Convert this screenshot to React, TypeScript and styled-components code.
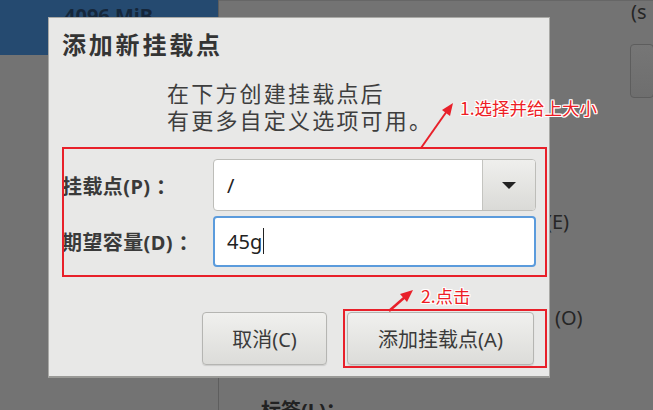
import styled, { createGlobalStyle } from "styled-components";

const GlobalStyle = createGlobalStyle`
    html, body {
        margin: 0;
        padding: 0;
        background: #737373;
    }
    * {
        box-sizing: border-box;
    }
`;

const UI_FONT = `"Noto Sans", "Noto Sans CJK SC", "DejaVu Sans", sans-serif`;

const Screen = styled.div`
    position: relative;
    width: 653px;
    height: 410px;
    overflow: hidden;
    display: grid;
    grid-template-columns: 219px 1fr;
    background: #737373;
    font-family: ${UI_FONT};
`;

/* ---------- dimmed window behind the dialog ---------- */

const LeftPane = styled.div`
    display: flex;
    flex-direction: column;
    border-right: 1px solid #5e5e5e;
`;

const SelectedRow = styled.div`
    height: 55px;
    background: #254a70;
    padding: 6px 0 0 64px;
    font-size: 20px;
    font-weight: bold;
    color: #15263a;
    line-height: 20px;
`;

const RightPane = styled.div`
    display: grid;
    grid-template-columns: 1fr 5px;
    border-top: 1px solid #666;
    overflow: hidden;
`;

const RightContent = styled.div`
    display: flex;
    flex-direction: column;
`;

const BgRow = styled.div<{ $indent: number; $height: number; $top?: number }>`
    height: ${(p) => p.$height}px;
    margin-top: ${(p) => p.$top ?? 0}px;
    padding-left: ${(p) => p.$indent}px;
    display: flex;
    align-items: center;
    white-space: nowrap;
    font-size: 20px;
    color: #262626;
`;

const BgLabel = styled.span`
    font-weight: bold;
    color: #222;
`;

const GhostButton = styled.div`
    width: 24px;
    height: 54px;
    border: 1px solid #5d5d5d;
    border-radius: 4px;
    background: linear-gradient(#767676, #6e6e6e);
`;

const ScrollStrip = styled.div`
    background: linear-gradient(#254a70 0, #254a70 57px, transparent 57px);
`;

/* ---------- dialog ---------- */

const Dialog = styled.div`
    position: absolute;
    left: 48px;
    top: 17px;
    width: 502px;
    height: 361px;
    background: #e8e8e7;
    border: 1px solid #a9a9a6;
    border-bottom: 2px solid #9a9a97;
    padding: 10px 14px 0 13px;
    display: flex;
    flex-direction: column;
    color: #353535;
`;

const Title = styled.h1`
    margin: 0;
    font-size: 24px;
    line-height: 34px;
    letter-spacing: 2.8px;
    font-weight: bold;
    font-family: ${UI_FONT};
    color: #343434;
`;

const Hint = styled.p`
    margin: 18px 0 0 105px;
    font-size: 22px;
    line-height: 27px;
    letter-spacing: 2.2px;
    color: #3e3e3e;
`;

const Form = styled.div`
    margin-top: 25px;
    display: grid;
    grid-template-columns: 151px 323px;
    grid-auto-rows: 52px;
    row-gap: 4px;
    align-items: center;
`;

const FieldLabel = styled.label`
    font-size: 20px;
    letter-spacing: 0.4px;
    font-weight: bold;
    color: #3a3a3a;
    white-space: nowrap;
`;

const Combo = styled.div`
    height: 52px;
    display: flex;
    border: 1px solid #bdbdb9;
    border-radius: 4px;
    background: #fff;
    overflow: hidden;
`;

const ComboText = styled.div`
    flex: 1;
    display: flex;
    align-items: center;
    padding-left: 13px;
    font-size: 20px;
    color: #222;
`;

const ComboButton = styled.div`
    width: 53px;
    display: flex;
    align-items: center;
    justify-content: center;
    border-left: 1px solid #c4c4c0;
    background: linear-gradient(#efefed, #dadad7);
`;

const Caret = styled.div`
    width: 0;
    height: 0;
    border-left: 7px solid transparent;
    border-right: 7px solid transparent;
    border-top: 7px solid #222;
`;

const Entry = styled.div`
    height: 51px;
    display: flex;
    align-items: center;
    padding-left: 12px;
    border: 2px solid #5b9bdc;
    border-radius: 4px;
    background: #fff;
    font-size: 20px;
    color: #222;
`;

const CursorBar = styled.span`
    display: inline-block;
    width: 1px;
    height: 26px;
    margin-left: 1px;
    background: #222;
`;

const Actions = styled.div`
    margin-top: 45px;
    display: flex;
    justify-content: flex-end;
    gap: 20px;
    padding-right: 1px;
`;

const Button = styled.button<{ $width: number }>`
    width: ${(p) => p.$width}px;
    height: 53px;
    border: 1px solid #b5b5b2;
    border-radius: 4px;
    background: linear-gradient(#f0f0ee, #dcdcd9);
    box-shadow: 0 1px 1px rgba(0, 0, 0, 0.12);
    font-family: ${UI_FONT};
    font-size: 20px;
    color: #3a3a3a;
    padding: 0;
`;

/* ---------- annotations ---------- */

const Marker = styled.div<{ $x: number; $y: number; $w: number; $h: number }>`
    position: absolute;
    left: ${(p) => p.$x}px;
    top: ${(p) => p.$y}px;
    width: ${(p) => p.$w}px;
    height: ${(p) => p.$h}px;
    border: 2px solid #e8202a;
    pointer-events: none;
`;

const Note = styled.div<{ $x: number; $y: number }>`
    position: absolute;
    left: ${(p) => p.$x}px;
    top: ${(p) => p.$y}px;
    font-family: "Noto Sans CJK SC", "Noto Sans", sans-serif;
    font-size: 17.5px;
    line-height: 20px;
    color: #ee1c25;
    white-space: nowrap;
    text-shadow: 1px 0 0 #fff, -1px 0 0 #fff, 0 1px 0 #fff, 0 -1px 0 #fff,
        1px 1px 0 #fff, -1px -1px 0 #fff, 1px -1px 0 #fff, -1px 1px 0 #fff;
`;

const ArrowLayer = styled.svg`
    position: absolute;
    left: 0;
    top: 0;
    pointer-events: none;
`;

export default function App() {
    return (
        <>
            <GlobalStyle />
            <Screen>
                <LeftPane>
                    <SelectedRow>4096 MiB</SelectedRow>
                </LeftPane>

                <RightPane>
                    <RightContent>
                        <BgRow $indent={412} $height={20}>(s</BgRow>
                        <BgRow $indent={411} $height={54} $top={23}>
                            <GhostButton />
                        </BgRow>
                        <BgRow $indent={327} $height={26} $top={110}>(E)</BgRow>
                        <BgRow $indent={336} $height={26} $top={70}>(O)</BgRow>
                        <BgRow $indent={42} $height={26} $top={66}>
                            <BgLabel>标签(L)：</BgLabel>
                        </BgRow>
                    </RightContent>
                    <ScrollStrip />
                </RightPane>

                <Dialog>
                    <Title>添加新挂载点</Title>
                    <Hint>
                        在下方创建挂载点后
                        <br />
                        有更多自定义选项可用。
                    </Hint>

                    <Form>
                        <FieldLabel>挂载点(P) ：</FieldLabel>
                        <Combo>
                            <ComboText>/</ComboText>
                            <ComboButton>
                                <Caret />
                            </ComboButton>
                        </Combo>

                        <FieldLabel>期望容量(D) ：</FieldLabel>
                        <Entry>
                            45g
                            <CursorBar />
                        </Entry>
                    </Form>

                    <Actions>
                        <Button $width={125}>取消(C)</Button>
                        <Button $width={187}>添加挂载点(A)</Button>
                    </Actions>
                </Dialog>

                <Marker $x={62} $y={147} $w={485} $h={130} />
                <Marker $x={343} $y={309} $w={204} $h={59} />

                <Note $x={460} $y={98}>1.选择并给上大小</Note>
                <Note $x={421} $y={286}>2.点击</Note>

                <ArrowLayer width={653} height={410} viewBox="0 0 653 410">
                    <line x1={421} y1={148} x2={447} y2={111} stroke="#e8202a" strokeWidth={2} />
                    <polygon points="453,103 442,110 450,116" fill="#e8202a" />
                    <line x1={389} y1={311} x2={405} y2={297} stroke="#e8202a" strokeWidth={2.5} />
                    <polygon points="413,290 400,294 407,302" fill="#e8202a" />
                </ArrowLayer>
            </Screen>
        </>
    );
}
